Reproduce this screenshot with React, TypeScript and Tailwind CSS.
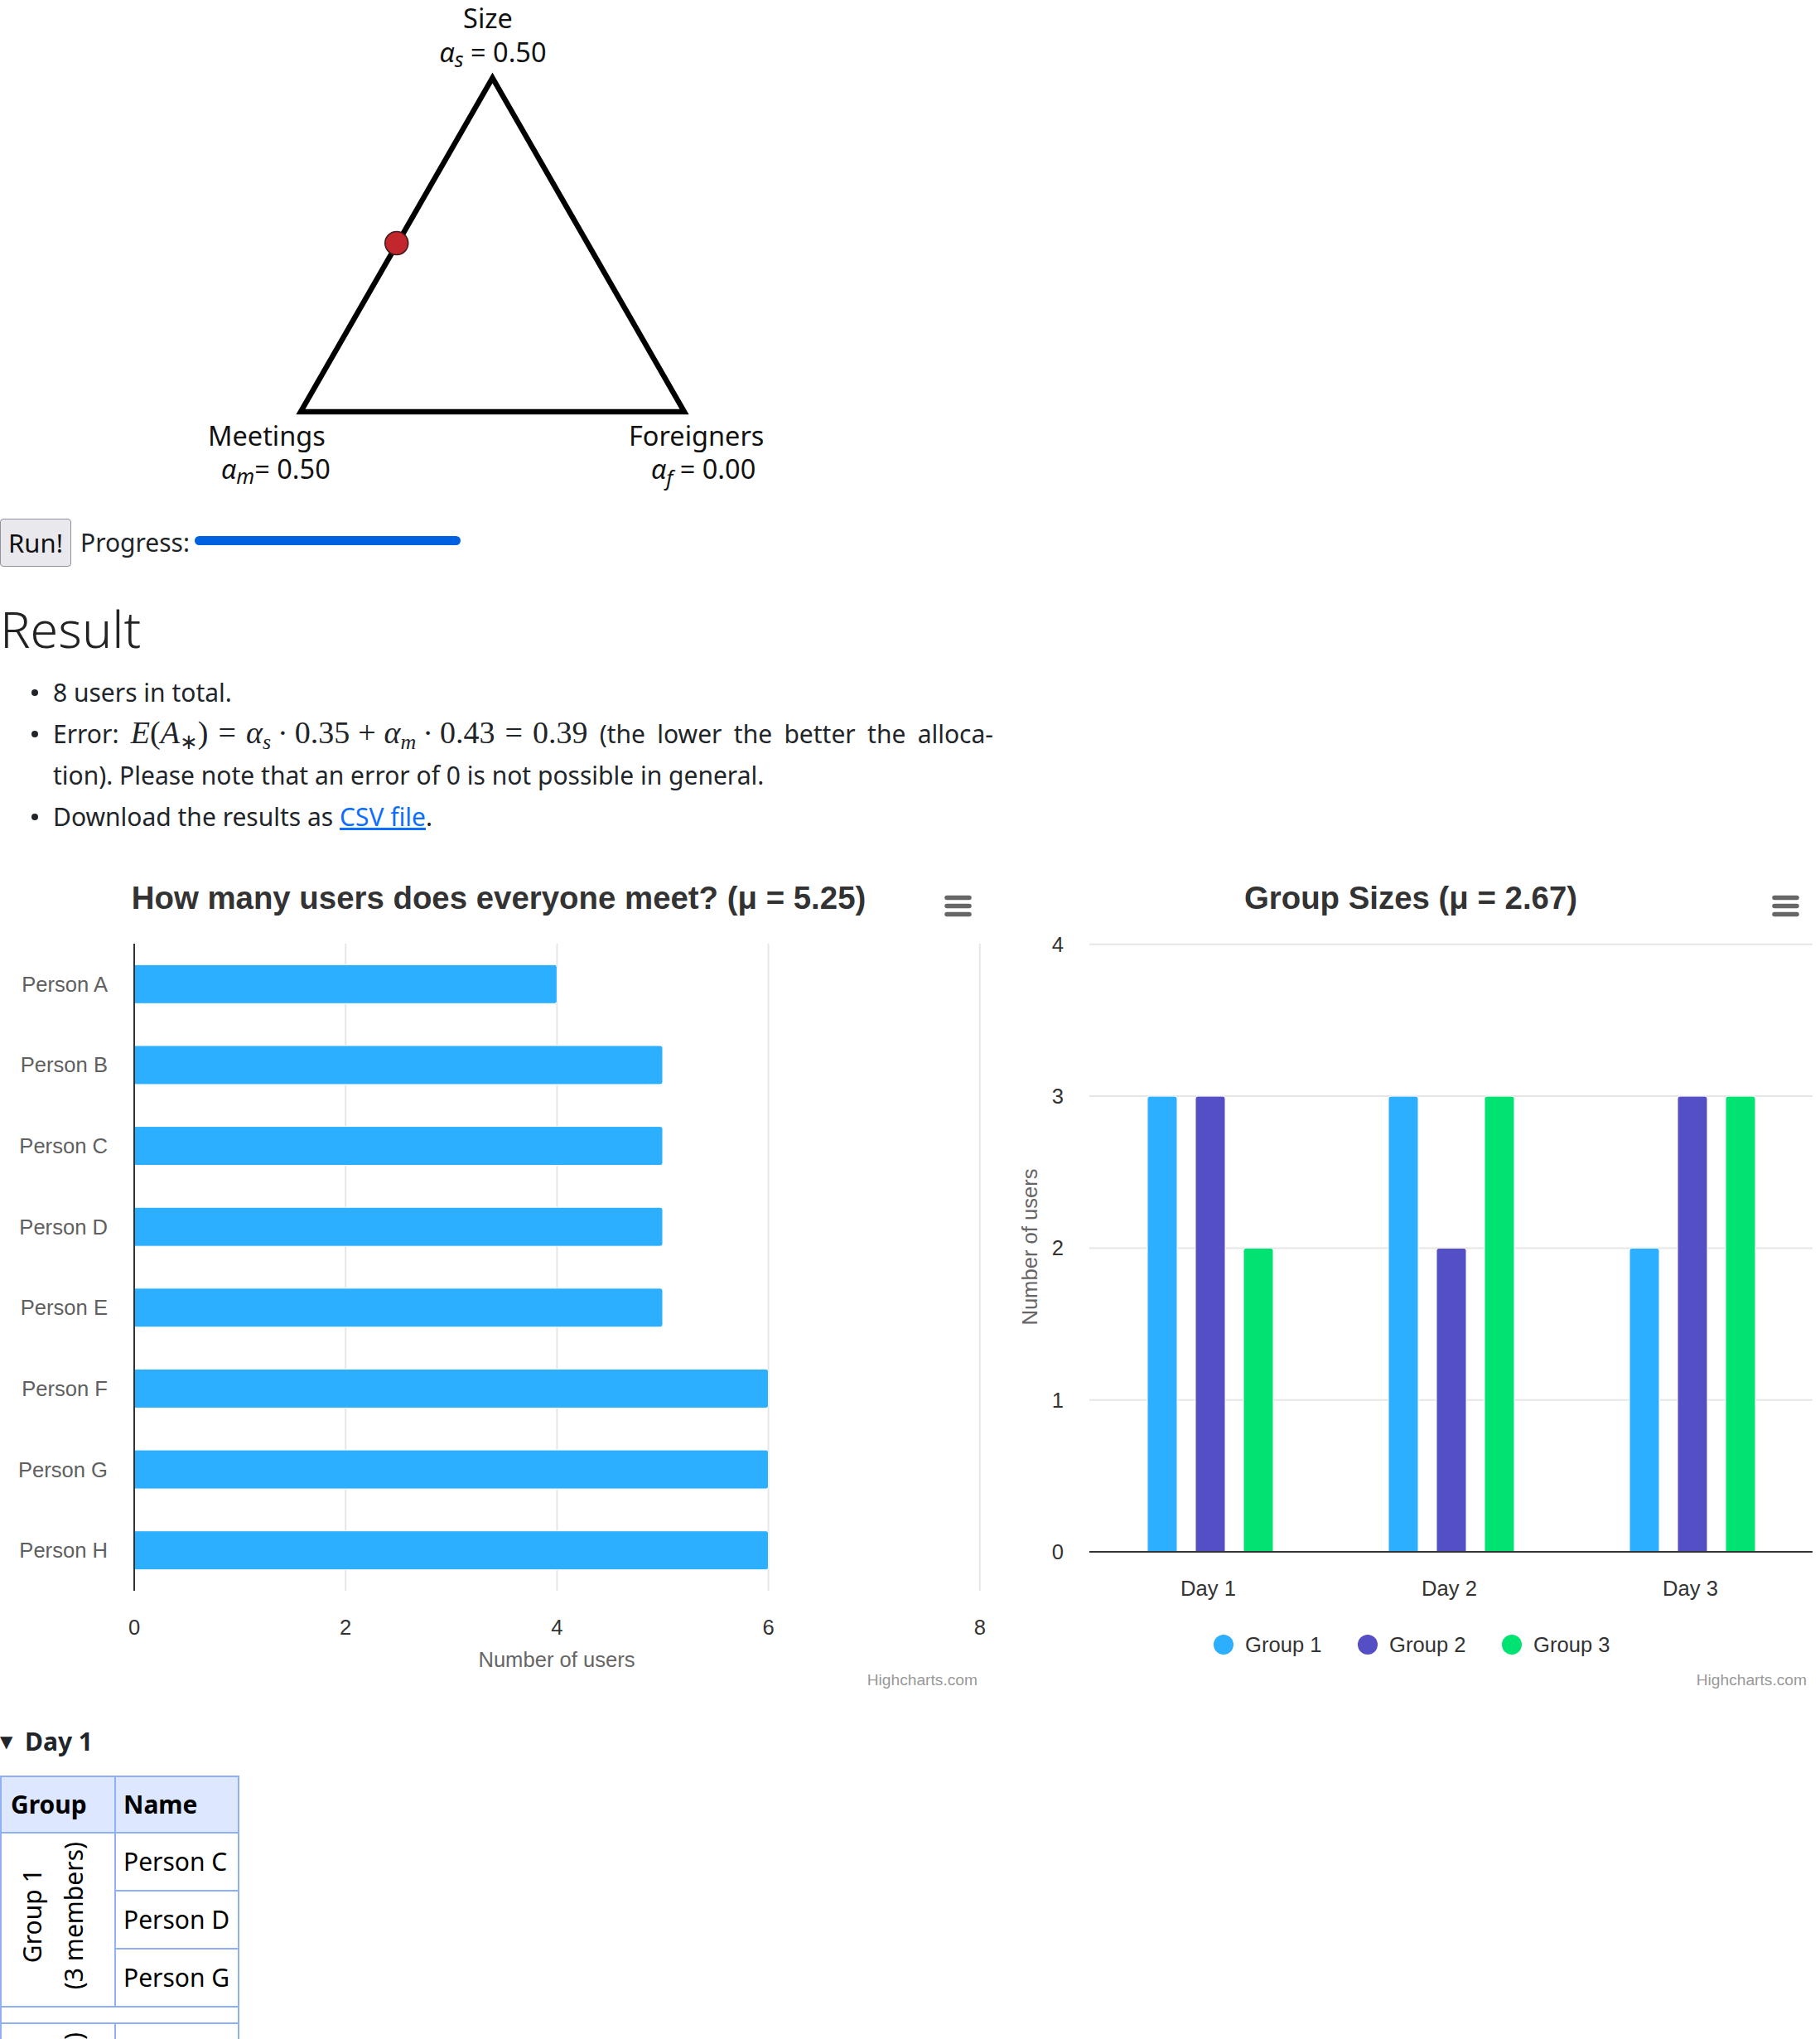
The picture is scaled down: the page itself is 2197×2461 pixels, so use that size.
import React from 'react';

const HC_FONT = "'Liberation Sans', Arial, Helvetica, sans-serif";
const UI_FONT = "'Noto Sans', 'Open Sans', sans-serif";

const persons = [
  { name: 'Person A', value: 4 },
  { name: 'Person B', value: 5 },
  { name: 'Person C', value: 5 },
  { name: 'Person D', value: 5 },
  { name: 'Person E', value: 5 },
  { name: 'Person F', value: 6 },
  { name: 'Person G', value: 6 },
  { name: 'Person H', value: 6 },
];

const groupColors = ['#2caffe', '#544fc5', '#00e272'];

const days = [
  { name: 'Day 1', sizes: [3, 3, 2] },
  { name: 'Day 2', sizes: [3, 2, 3] },
  { name: 'Day 3', sizes: [2, 3, 3] },
];

const day1Groups = [
  { name: 'Group 1', members: ['Person C', 'Person D', 'Person G'] },
  { name: 'Group 2', members: ['Person A', 'Person E', 'Person H'] },
  { name: 'Group 3', members: ['Person B', 'Person F'] },
];

// three rounded bars, like the highcharts export button
function MenuIcon({ x, y }: { x: number; y: number }) {
  return (
    <g stroke="#666666" strokeWidth={5.5} strokeLinecap="round">
      <line x1={x + 3} y1={y + 2.5} x2={x + 30} y2={y + 2.5} />
      <line x1={x + 3} y1={y + 12.5} x2={x + 30} y2={y + 12.5} />
      <line x1={x + 3} y1={y + 22.5} x2={x + 30} y2={y + 22.5} />
    </g>
  );
}

function hBar(x0: number, x1: number, y0: number, y1: number, r = 3) {
  return `M${x0} ${y0} H${x1 - r} Q${x1} ${y0} ${x1} ${y0 + r} V${y1 - r} Q${x1} ${y1} ${x1 - r} ${y1} H${x0} Z`;
}

function vBar(x0: number, x1: number, yt: number, yb: number, r = 3) {
  return `M${x0} ${yb} V${yt + r} Q${x0} ${yt} ${x0 + r} ${yt} H${x1 - r} Q${x1} ${yt} ${x1} ${yt + r} V${yb} Z`;
}

function Triangle() {
  const A = { x: 594.5, y: 94 };
  const L = { x: 363, y: 497 };
  const R = { x: 826, y: 497 };
  const dot = { x: (A.x + L.x) / 2, y: (A.y + L.y) / 2 - 2 };
  return (
    <svg width={1000} height={620} className="block" fontFamily={UI_FONT} fill="#111">
      <text x={589} y={34} textAnchor="middle" fontSize={32.5}>Size</text>
      <text x={595} y={75} textAnchor="middle" fontSize={32.5}>
        <tspan fontStyle="italic">α</tspan>
        <tspan fontStyle="italic" fontSize={25} dy={6}>s</tspan>
        <tspan dy={-6}> = 0.50</tspan>
      </text>
      <path
        d={`M${A.x} ${A.y} L${R.x} ${R.y} L${L.x} ${L.y} Z`}
        fill="none"
        stroke="#000"
        strokeWidth={6.5}
        strokeLinejoin="miter"
      />
      <circle cx={dot.x} cy={dot.y} r={14} fill="#c1272d" stroke="#3a1a1a" strokeWidth={1.5} />
      <text x={251} y={538} fontSize={32.5}>Meetings</text>
      <text x={267} y={578} fontSize={32.5}>
        <tspan fontStyle="italic">α</tspan>
        <tspan fontStyle="italic" fontSize={25} dy={6}>m</tspan>
        <tspan dy={-6}>= 0.50</tspan>
      </text>
      <text x={759} y={538} fontSize={32.5}>Foreigners</text>
      <text x={786} y={578} fontSize={32.5}>
        <tspan fontStyle="italic">α</tspan>
        <tspan fontStyle="italic" fontSize={25} dy={8}>f</tspan>
        <tspan dy={-8}> = 0.00</tspan>
      </text>
    </svg>
  );
}

function MeetChart() {
  const left = 162;
  const top = 98;
  const bottom = 879;
  const unit = 127.6;
  const cat = (bottom - top) / persons.length;
  return (
    <svg width={1200} height={1010} className="block shrink-0" fontFamily={HC_FONT}>
      <text x={602} y={56} textAnchor="middle" fontSize={38.4} fontWeight={700} fill="#333333">
        How many users does everyone meet? (μ = 5.25)
      </text>
      <MenuIcon x={1140} y={40} />
      {[1, 2, 3, 4].map((k) => (
        <line key={k} x1={left + unit * 2 * k} y1={top} x2={left + unit * 2 * k} y2={bottom} stroke="#e6e6e6" strokeWidth={2} />
      ))}
      {persons.map((p, i) => {
        const c = top + cat * (i + 0.5);
        return (
          <g key={p.name}>
            <path d={hBar(left, left + unit * p.value, c - 23.5, c + 23.5)} fill="#2caffe" stroke="#ffffff" strokeWidth={1} />
            <text x={130} y={c + 9} textAnchor="end" fontSize={25.6} fill="#606060">{p.name}</text>
          </g>
        );
      })}
      <line x1={left} y1={top} x2={left} y2={bottom} stroke="#333333" strokeWidth={2} />
      {[0, 2, 4, 6, 8].map((v) => (
        <text key={v} x={left + unit * v} y={932} textAnchor="middle" fontSize={25.6} fill="#333333">{v}</text>
      ))}
      <text x={672} y={971} textAnchor="middle" fontSize={25.6} fill="#666666">Number of users</text>
      <text x={1180} y={993} textAnchor="end" fontSize={19.2} fill="#999999">Highcharts.com</text>
    </svg>
  );
}

function SizeChart() {
  const left = 115;
  const right = 988;
  const base = 832;
  const unit = 183.3;
  const cat = (right - left) / days.length;
  const legendX = [277, 451, 625];
  return (
    <svg width={997} height={1010} className="block shrink-0" fontFamily={HC_FONT}>
      <text x={503} y={56} textAnchor="middle" fontSize={38.4} fontWeight={700} fill="#333333">
        Group Sizes (μ = 2.67)
      </text>
      <MenuIcon x={939} y={40} />
      {[1, 2, 3, 4].map((k) => (
        <line key={k} x1={left} y1={base - unit * k} x2={right} y2={base - unit * k} stroke="#e6e6e6" strokeWidth={2} />
      ))}
      {[0, 1, 2, 3, 4].map((k) => (
        <text key={k} x={84} y={base - unit * k + 9} textAnchor="end" fontSize={25.6} fill="#333333">{k}</text>
      ))}
      <text transform="translate(52 464) rotate(-90)" textAnchor="middle" fontSize={25.6} fill="#666666">
        Number of users
      </text>
      {days.map((d, di) =>
        d.sizes.map((s, gi) => {
          const x0 = left + cat * di + 70 + 58 * gi;
          return <path key={`${di}-${gi}`} d={vBar(x0, x0 + 36, base - unit * s, base)} fill={groupColors[gi]} stroke="#ffffff" strokeWidth={1} />;
        })
      )}
      <line x1={left} y1={base} x2={right} y2={base} stroke="#333333" strokeWidth={2} />
      {days.map((d, di) => (
        <text key={d.name} x={left + cat * (di + 0.5) - 2} y={885} textAnchor="middle" fontSize={25.6} fill="#333333">{d.name}</text>
      ))}
      {legendX.map((cx, i) => (
        <g key={cx}>
          <circle cx={cx} cy={944} r={12} fill={groupColors[i]} />
          <text x={cx + 26} y={953} fontSize={25.6} fill="#333333">Group {i + 1}</text>
        </g>
      ))}
      <text x={981} y={993} textAnchor="end" fontSize={19.2} fill="#999999">Highcharts.com</text>
    </svg>
  );
}

function Bullet() {
  return (
    <span className="flex h-[50px] w-[64px] shrink-0 items-center">
      <span className="ml-[38px] h-[8px] w-[8px] rounded-full bg-[#212529]" />
    </span>
  );
}

function ErrorMath() {
  return (
    <span className="inline-block whitespace-nowrap font-['Liberation_Serif',serif] text-[38px] leading-none">
      <i>E</i>(<i>A</i>
      <sub className="text-[26px]">∗</sub>)
      <span className="mx-[12px]">=</span>
      <i>α</i>
      <sub className="text-[26px]"><i>s</i></sub>
      <span className="mx-[8px]">·</span>0.35
      <span className="mx-[10px]">+</span>
      <i>α</i>
      <sub className="text-[26px]"><i>m</i></sub>
      <span className="mx-[8px]">·</span>0.43
      <span className="mx-[12px]">=</span>0.39
    </span>
  );
}

const cell = 'border-2 border-[#8fb0f4]';

export default function App() {
  return (
    <div className="h-[2461px] w-[2197px] overflow-hidden bg-white font-['Noto_Sans',sans-serif] text-[30px] leading-[50px] text-[#212529]">
      <Triangle />

      <div className="mt-[6px] flex h-[58px] items-center">
        <button className="flex h-[58px] w-[86px] items-center justify-center rounded-[4px] border-[1.5px] border-[#8f8f9d] bg-[#e9e9ed] text-[31px] leading-none text-[#111]">
          Run!
        </button>
        <span className="ml-[11px]">Progress:</span>
        <div className="mb-[6px] ml-[6px] h-[11px] w-[321px] rounded-full bg-[#0060df]" />
      </div>

      <h1 className="mt-[39px] text-[61px] font-light leading-[72px] text-[#222]">Result</h1>

      <ul className="mt-[16px]">
        <li className="flex">
          <Bullet />
          <span>8 users in total.</span>
        </li>
        <li className="flex">
          <Bullet />
          <div className="w-[1135px]">
            <div className="h-[50px] text-justify [text-align-last:justify]">
              Error: <ErrorMath /> (the lower the better the alloca-
            </div>
            <div>tion). Please note that an error of 0 is not possible in general.</div>
          </div>
        </li>
        <li className="flex">
          <Bullet />
          <span>
            Download the results as <a href="#" className="text-[#0d6efd] underline">CSV file</a>.
          </span>
        </li>
      </ul>

      <div className="mt-[30px] flex">
        <MeetChart />
        <SizeChart />
      </div>

      <details open className="mt-[27px]">
        <summary className="flex cursor-pointer list-none items-center font-bold leading-[48px] [&::-webkit-details-marker]:hidden">
          <span className="w-[30px] font-['DejaVu_Sans'] text-[20px] leading-none">▼</span>
          Day 1
        </summary>
        <table className="mt-[17px] border-collapse whitespace-nowrap text-[30px] leading-[40px] text-black">
          <thead>
            <tr className="h-[68px] bg-[#dde7fd]">
              <th className={`${cell} w-[138px] px-[11px] text-left font-bold`}>Group</th>
              <th className={`${cell} w-[146px] px-[9px] text-left font-bold`}>Name</th>
            </tr>
          </thead>
          <tbody>
            {day1Groups.map((g, gi) => (
              <React.Fragment key={g.name}>
                {gi > 0 && (
                  <tr className="h-[20px]">
                    <td colSpan={2} className={cell} />
                  </tr>
                )}
                {g.members.map((m, mi) => (
                  <tr key={m} className="h-[70px]">
                    {mi === 0 && (
                      <td rowSpan={g.members.length} className={`${cell} pr-[12px] text-center align-middle`}>
                        <div className="inline-block rotate-180 whitespace-nowrap leading-[50px] [writing-mode:vertical-rl]">
                          {g.name}
                          <br />({g.members.length} members)
                        </div>
                      </td>
                    )}
                    <td className={`${cell} px-[9px]`}>{m}</td>
                  </tr>
                ))}
              </React.Fragment>
            ))}
          </tbody>
        </table>
      </details>
    </div>
  );
}
